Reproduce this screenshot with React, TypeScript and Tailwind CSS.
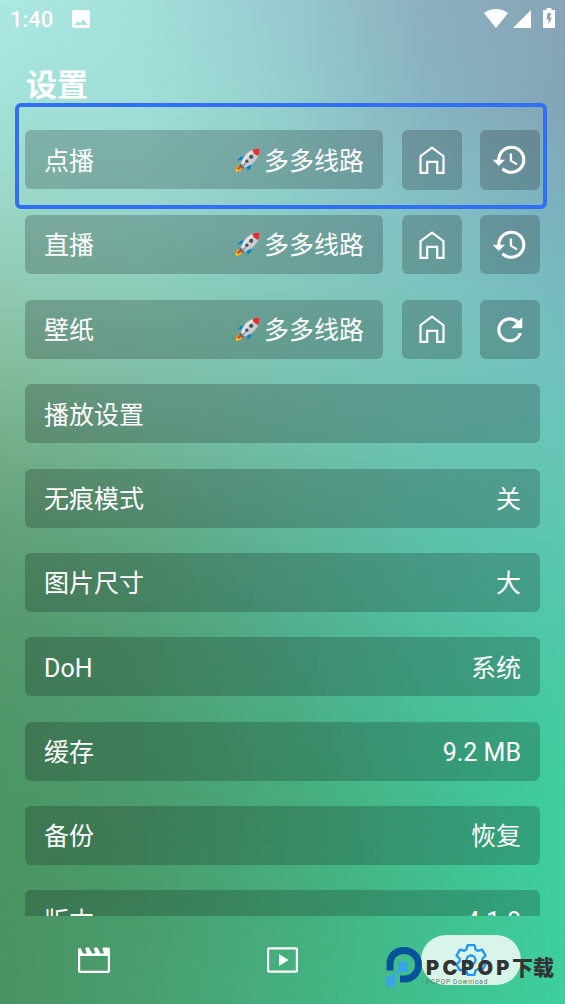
import type { ReactNode } from 'react';
import { MdHistory, MdRefresh } from 'react-icons/md';

// Wallpaper colour grid: every row is a horizontal blend, faded into the next one
const STOPS = [0, 25, 50, 75, 100];
const WALLPAPER = [
  { y: 0, colors: ['#ade9e3', '#a2e0db', '#98cbd0', '#8cb0c0', '#88a5b8'] },
  { y: 100, colors: ['#a2e2d8', '#a0dfd9', '#94cfcd', '#88b5c1', '#83a5b6'] },
  { y: 200, colors: ['#9ad7c7', '#98d7cc', '#8dcdc8', '#84c0c4', '#7cb0be'] },
  { y: 290, colors: ['#90c9b1', '#8ccdb9', '#84c8bb', '#7cc4bf', '#76bac0'] },
  { y: 370, colors: ['#82bc9c', '#80bfa8', '#7ac3b2', '#74c4b8', '#70c2bd'] },
  { y: 455, colors: ['#71ac85', '#70b494', '#6dbca4', '#69c3b0', '#66c6b7'] },
  { y: 540, colors: ['#61a076', '#60a883', '#5eb497', '#5bc0a8', '#5cc6b2'] },
  { y: 625, colors: ['#56996d', '#54a178', '#52ae8c', '#50be9f', '#50c9a9'] },
  { y: 710, colors: ['#509769', '#4e9f72', '#4cad84', '#49be98', '#46cba2'] },
  { y: 790, colors: ['#4d9565', '#4b9c6d', '#48ab7c', '#44bd90', '#40ce9f'] },
  { y: 880, colors: ['#4b9463', '#4a9c6b', '#47ac7c', '#42be8f', '#3ed09d'] },
  { y: 1004, colors: ['#4a9263', '#499f6e', '#45af7e', '#41c08f', '#3dcf9b'] },
];

const SOURCES = [
  { label: '点播', action: 'history' },
  { label: '直播', action: 'history' },
  { label: '壁纸', action: 'refresh' },
];

const SETTINGS = [
  { label: '播放设置', value: '' },
  { label: '无痕模式', value: '关' },
  { label: '图片尺寸', value: '大' },
  { label: 'DoH', value: '系统' },
  { label: '缓存', value: '9.2 MB' },
  { label: '备份', value: '恢复' },
  { label: '版本', value: '4.1.8' },
];

// Six teeth, [half width, distance from the centre] for each corner
const TOOTH = [
  [-4.6, 10.4],
  [-3.5, 14.8],
  [3.5, 14.8],
  [4.6, 10.4],
];
const GEAR = [0, 60, 120, 180, 240, 300]
  .flatMap((deg) => {
    const a = (deg * Math.PI) / 180;
    return TOOTH.map(([x, r]) => `${x * Math.cos(a) + r * Math.sin(a)},${x * Math.sin(a) - r * Math.cos(a)}`);
  })
  .join(' ');

function Wallpaper() {
  return (
    <div className="absolute inset-0">
      {WALLPAPER.map(({ y, colors }, i) => {
        const from = i > 0 ? WALLPAPER[i - 1].y : -1;
        return (
          <div
            key={y}
            className="absolute inset-0"
            style={{
              backgroundImage: `linear-gradient(to right, ${colors.map((c, n) => `${c} ${STOPS[n]}%`).join(', ')})`,
              maskImage: `linear-gradient(to bottom, transparent ${from}px, black ${y}px)`,
            }}
          />
        );
      })}
    </div>
  );
}

function Rocket() {
  return (
    <svg viewBox="0 0 26 26" className="h-[26px] w-[26px]">
      <path d="M4 17.5 1.2 21l-.5 4.3 4.5-1.2 3.6-3z" fill="#f9a61a" />
      <path d="m4.6 18.5-2.6 3 .2 1.6 4.2-2z" fill="#e5432d" />
      <path d="m1.2 25-.2-3 2.2 1.2z" fill="#ffd93b" />
      <path d="M9.6 9.4 5.4 10 2.6 13.2l5 .4zM16.3 16.6l-.4 4.4-3.4 2.8-.5-5z" fill="#0a82c9" />
      <path d="M5.6 16.3 9.8 20.5 7.6 22 4.2 18.7z" fill="#5b686e" />
      <path d="M24.6 1.4C18 1.4 11.3 4.6 7.4 12l-2 4.6 4.2 4.2 4.6-2.2C21.8 14.4 24.8 8 24.6 1.4z" fill="#c9cdd0" />
      <path d="M23.4 2.6C17 3.2 11.6 6.4 8.2 12.6l-1.3 3.6 1.6 1.4C11 11 16 6 23.4 2.6z" fill="#e6e6e6" />
      <path d="M17.4 2.9c2.2-1 4.7-1.5 7.2-1.5.1 2.5-.4 5.2-1.5 7.4-2.9-.8-5-2.9-5.7-5.9z" fill="#e2302f" />
      <circle cx="16.2" cy="9.8" r="2.1" fill="#45565f" />
      <circle cx="11.8" cy="14.2" r="1.7" fill="#45565f" />
      <path d="m10.5 16.2-3 3.3" stroke="#7d878c" strokeWidth="1.2" />
    </svg>
  );
}

function HomeIcon() {
  return (
    <svg viewBox="0 0 26 28" className="h-7 w-[26px]" fill="none" stroke="white" strokeWidth="2.2">
      <path d="M1.5 26.8V10.2L13 1.6l11.5 8.6v16.6h-6.3v-11H8.2v11z" />
    </svg>
  );
}

function Card({ children, className = '' }: { children: ReactNode; className?: string }) {
  return (
    <div className={`flex h-[59px] shrink-0 items-center justify-between rounded-md bg-black/20 px-[19px] ${className}`}>
      {children}
    </div>
  );
}

function IconButton({ label, children }: { label: string; children: ReactNode }) {
  return (
    <button aria-label={label} className="flex h-[59.5px] w-[60px] items-center justify-center rounded-md bg-black/20">
      {children}
    </button>
  );
}

function StatusBar() {
  return (
    <div className="flex h-10 items-center pr-[10px] pl-[10px]">
      <span className="text-[22px] leading-none font-medium">1:40</span>
      <svg viewBox="0 0 18 18" className="mb-[2px] ml-[19px] size-[18px]">
        <path
          fillRule="evenodd"
          fill="white"
          d="M2 0h14a2 2 0 0 1 2 2v14a2 2 0 0 1-2 2H2a2 2 0 0 1-2-2V2a2 2 0 0 1 2-2zm.5 15h13l-4.2-5.6-3.2 4.1-2.2-2.6z"
        />
      </svg>
      <svg viewBox="0 0 24 19" className="mb-[3px] ml-auto h-[19px] w-6" fill="white">
        <path d="M0 4.2C7-1.4 17-1.4 24 4.2L12 19z" />
      </svg>
      <svg viewBox="0 0 18 18" className="mr-3 mb-[2px] ml-[5px] size-[18px]" fill="white">
        <path d="M18 0v18H0z" />
      </svg>
      <svg viewBox="0 0 12 20" className="mb-1 h-5 w-3" fill="white">
        <path fillRule="evenodd" d="M3.5 0h5v2H12v18H0V2h3.5zM4.6 5 3.5 11.4h2.3l-.5 5.6 3.6-7.6H6.7L8.3 5z" />
      </svg>
    </div>
  );
}

function NavBar() {
  return (
    <nav className="grid h-[88px] shrink-0 grid-cols-3 items-center justify-items-center">
      <svg viewBox="0 0 32 27" className="h-[27px] w-8" fill="white">
        <path
          fillRule="evenodd"
          d="M1 1l1.5 0L5 6.5h4L7.3 2Q7 .5 8.5.5H11l3 6h3.5L15.8 2Q15.5.5 17 .5h2.5l3 6h3.5L24.5 2Q24 .5 25.5.5H30a2 2 0 0 1 2 2V24a2 2 0 0 1-2 2H2a2 2 0 0 1-2-2V2.5zM2.2 9v14.7h27.6V9z"
        />
      </svg>
      <svg viewBox="0 0 31 26" className="h-[26px] w-[31px]">
        <rect x="1.1" y="1.3" width="28.8" height="23.4" rx="1" fill="none" stroke="white" strokeWidth="2.2" />
        <path d="M12 7v12l9.5-6z" fill="white" />
      </svg>
      <div className="flex h-[50px] w-[100px] items-center justify-center rounded-full bg-[#d9f4e9]">
        <svg viewBox="-17 -17 34 34" className="size-[34px]" fill="none" stroke="#2196f3" strokeWidth="2.3">
          <polygon points={GEAR} strokeLinejoin="round" />
          <circle r="4.5" />
        </svg>
      </div>
    </nav>
  );
}

function Watermark() {
  return (
    <div className="absolute top-[946px] left-[386px] flex">
      <svg viewBox="0 0 38 42" className="h-[42px] w-[38px]">
        <path
          d="M4 24.5V18C4 9.5 10 4.5 18 4.5S32.5 10.500 32.500 18.500 26.500 33 18.500 33H14"
          fill="none"
          stroke="#03529a"
          strokeWidth="7"
        />
        <path d="M6 32 17 20" stroke="#3aa5e4" strokeWidth="2" />
        <path d="M12.5 15.5H22V26h-9.5zM.5 29.5H9v11.5H.5z" fill="#3aa5e4" />
      </svg>
      <div className="flex flex-col pt-3 pl-[2px] text-[#333]">
        <span className="flex items-center leading-[20px] font-black whitespace-nowrap">
          <span className="w-[86px] font-['Inter',sans-serif] text-[20px] tracking-[3.4px]">PCPOP</span>
          <span className="text-[21px]">下载</span>
        </span>
        <span className="text-[6.5px] leading-[8px] tracking-[0.75px] text-[#5c7a6e]">PCPOP Download</span>
      </div>
    </div>
  );
}

export default function App() {
  return (
    <div className="relative h-[1004px] w-[565px] overflow-hidden font-['Roboto','Noto_Sans_CJK_SC',sans-serif] text-white">
      <Wallpaper />

      <div className="relative flex h-full flex-col">
        <StatusBar />
        <h1 className="flex h-[90px] shrink-0 items-center pl-[26px] text-[31px] leading-none font-bold">设置</h1>

        <main className="flex h-[786px] shrink-0 flex-col gap-[25.3px] overflow-hidden px-[25px] text-[25px] leading-none">
          {SOURCES.map(({ label, action }) => (
            <div key={label} className="flex shrink-0 gap-[18.5px]">
              <Card className="flex-1">
                <span className="pt-[3px]">{label}</span>
                <span className="flex items-center gap-[3px]">
                  <Rocket />
                  <span className="pt-[3px]">多多线路</span>
                </span>
              </Card>
              <IconButton label="home">
                <HomeIcon />
              </IconButton>
              <IconButton label={action}>
                {action === 'history' ? <MdHistory size={37.5} /> : <MdRefresh size={37.5} />}
              </IconButton>
            </div>
          ))}
          {SETTINGS.map(({ label, value }) => (
            <Card key={label}>
              <span className="pt-[3px]">{label}</span>
              <span className="pt-[3px]">{value}</span>
            </Card>
          ))}
        </main>

        <NavBar />
      </div>

      {/* Highlight around the first source */}
      <div className="pointer-events-none absolute top-[103px] left-[15px] h-[106px] w-[532px] rounded-md border-4 border-[#326ff5]" />

      <Watermark />
    </div>
  );
}
